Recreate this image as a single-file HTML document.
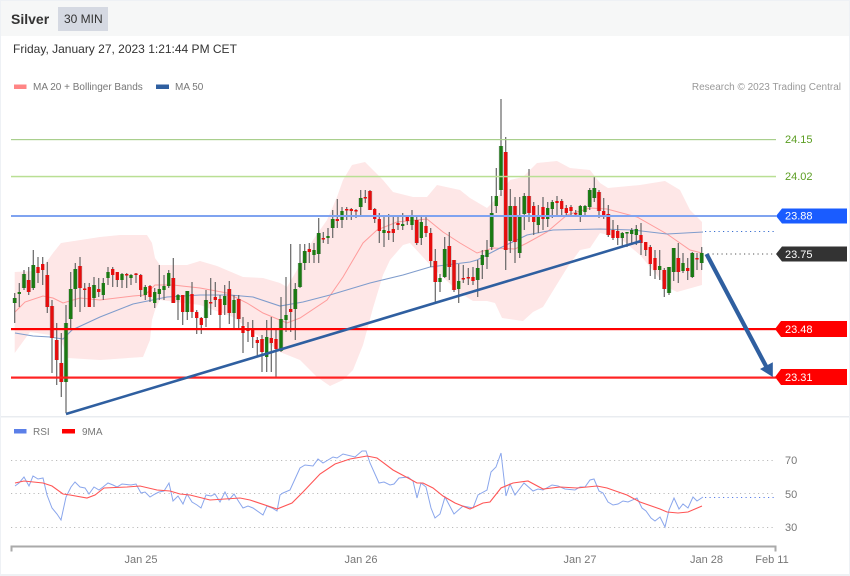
<!DOCTYPE html>
<html>
<head>
<meta charset="utf-8">
<style>
html,body{margin:0;padding:0;background:#fff}
body{width:850px;height:576px;overflow:hidden;position:relative;font-family:"Liberation Sans",sans-serif}
svg{position:absolute;left:0;top:0;filter:blur(.3px)}
text{font-family:"Liberation Sans",sans-serif}
</style>
</head>
<body>
<svg width="850" height="576" viewBox="0 0 850 576">
<rect width="850" height="576" fill="#fff"/>
<rect x="0" y="0" width="850" height="36" fill="#f6f7f7"/>
<rect x="58" y="7" width="50" height="24" fill="#d5d9e2"/>
<text x="11" y="24" font-size="14" font-weight="700" fill="#333">Silver</text>
<text x="64" y="23" font-size="12" fill="#333">30 MIN</text>
<text x="13" y="53" font-size="12" fill="#333">Friday, January 27, 2023 1:21:44 PM CET</text>
<rect x="14" y="84.5" width="12.5" height="4.5" fill="#ff8585"/>
<text x="33" y="90" font-size="10" fill="#777">MA 20 + Bollinger Bands</text>
<rect x="156" y="84.5" width="13" height="4.5" fill="#2f5fa0"/>
<text x="175" y="90" font-size="10" fill="#777">MA 50</text>
<text x="841" y="90" font-size="10" fill="#999" text-anchor="end">Research © 2023 Trading Central</text>

<!-- Bollinger band -->
<path fill="#fee7e7" d="M14.7 272L33 271 43 267 53 253 61 243 100 237 120 235 147 235 152 243 155 258 160 265 187 265 200 261 217 266 243 277 263 278 280 283 287 287 297 270 313 240 327 220 337 197 343 180 352 165 365 162 375 172 383 180 393 192 413 197 427 197 437 185 460 190 470 198 487 208 497 198 510 180 523 177 537 163 557 161 570 168 590 170 600 183 608 188 640 185 665 181 680 190 690 210 702 222V285L677 292 667 287 640 255 620 238 600 233 590 248 580 250 567 268 543 307 533 312 523 321 502 318 495 303 487 301 473 301 460 293 433 268 410 243 403 245 390 260 383 275 373 308 363 345 353 370 343 380 330 386 317 377 300 360 280 352 257 335 233 317 200 305 160 300 155 310 152 320 150 340 143 357 100 360 68 358 60 338 50 335 30 332 14.7 353Z"/>

<!-- MA lines -->
<path fill="none" stroke="#ff9c9c" stroke-width="1" d="M15 312L25 302 43 296 53 298 63 303 80 298 100 300 133 296 145 295 155 285 173 285 200 288 227 293 247 303 263 313 287 323 300 318 327 300 343 277 363 243 377 230 397 222 427 219 443 232 460 243 477 253 493 248 515 249 527 243 547 232 567 215 590 208 607 209 637 217 667 234 690 250 702 253"/>
<path fill="none" stroke="#7f9ccc" stroke-width="1.1" d="M15 333L33 336 50 337 63 339 72 330 100 317 133 304 167 297 200 295 230 295 253 297 280 306 303 302 330 295 370 283 403 275 430 267 470 262 477 260 500 248 527 235 553 230 600 229 633 230 667 234 703 232"/>

<!-- candles: wicks -->
<path fill="none" stroke="#666" stroke-width="1.2" d="M14.7 293V323M19.3 283V307M24 270V290M28.7 267V295M33.3 250V290M38 257V283M42.7 257V285M47.3 262V313M52 300V373M56.7 323V385M61.3 333V397M66 305V413M70.7 272V330M75.3 263V307M80 257V312M84.7 283V307M89.3 283V307M94 277V307M98.7 278V297M103.3 278V300M108 267V285M112.7 267V287M117.3 272V287M122 273V288M126.7 273V288M131 274V285M136 273V283M140.7 274V297M145.3 285V300M150 285V302M154.7 288V308M159.3 265V300M164 275V300M168.7 270V288M173.3 258V303M178 294V320M182.7 295V325M187.3 291V320M192 282V318M196.7 310V334M201.3 317V334M206 290V327M210.7 278V315M215.3 282V307M220 295V328M224.7 285V315M229.3 281V324M234 295V328M238.7 295V328M243 317V353M248 322V342M252.7 320V348M257.3 337V357M262 335V372M266.7 320V372M271.3 317V372M276 328V377M281 297V352M286 277V332M290.7 244V332M295.3 283V340M300 244V288M304.7 244V270M309.3 243V263M314 243V263M318.7 218V263M323.3 232V243M328 228V244M332.7 210V238M337.3 199V228M342 207V228M346.7 207V220M351.3 208V220M356 209V218M360.7 190V217M365.3 190V203M370 190V210M374.7 208V223M379.3 213V243M384 215V247M388.7 214V240M393.3 215V242M398 215V230M402.7 213V230M407.3 215V225M412 210V230M416.7 215V245M421.3 215V245M426 215V237M430.7 228V267M435.3 249V302M440 274V292M444.7 237V278M449.3 232V280M454 260V292M458.7 264V303M463.3 265V283M468.3 268V285M473 267V285M477.7 260V297M482.3 250V279M487 240V269M491.7 196V250M496.3 168V213M501 99V196M505.7 137V270M510.3 189V253M515 197V263M519.7 197V258M524.3 193V230M529 169V222M533.7 202V235M538.3 205V233M543 197V230M547.7 202V227M552.3 200V218M557 196V215M561.7 199V217M566.3 205V217M571 205V215M575.7 210V217M580.3 205V222M585 205V216M589.7 188V210M594.3 176V202M599 190V218M603.7 198V219M608.3 205V237M613 220V240M617.7 225V245M622.3 232V247M627 232V247M631.7 228V245M636.3 225V245M641 223V255M645.7 242V256M650.3 245V276M655 250V279M659.7 250V280M664.3 268V297M669 267V295M673.7 248V281M678.3 243V283M683 253V273M687.7 258V280M692.3 252V278M697 253V270M701.7 247V270"/>
<!-- candles: outlines -->
<path fill="none" stroke="#777" stroke-opacity=".55" stroke-width="4.4" d="M14.7 298V303M24 274V288M33.3 265V288M52 306V338M66 323V382M70.7 289V319M75.3 269V289M94 285V298M187.3 291V312M206 300V318M281 319V351M295.3 289V309M300 263V287M304.7 251V263M318.7 233V254M332.7 219V228M360.7 198V207M444.7 249V277M477.7 268V280M491.7 213V247M501 146V190M510.3 206V241M519.7 216V253M524.3 196V214M589.7 190V207M594.3 188V198M669 267V293M673.7 248V272M692.3 253V277M701.7 253V263M28.7 280V292M47.3 275V307M56.7 340V360M61.3 363V382M80 266V288M173.3 278V303M229.3 289V313M238.7 299V319M262 339V352M370 191V210M416.7 220V243M435.3 261V282M449.3 246V267M454 260V290M505.7 152V250M515 206V242M529 196V213M599 192V211M608.3 214V235M664.3 270V289M678.3 258V272"/>
<!-- candles: green bodies -->
<path fill="none" stroke="#1a7a12" stroke-width="3.3" d="M14.7 298V303M19.3 292V294M24 274V288M33.3 265V288M66 323V382M70.7 289V319M75.3 269V289M94 285V298M103.3 283V295M108 272V278M122 274V280M131 275V278M145.3 287V295M154.7 292V303M159.3 289V294M164 286V290M168.7 273V286M178 295V300M187.3 291V312M206 300V318M224.7 296V305M234 300V313M266.7 337V357M281 319V351M286 315V320M295.3 289V309M300 263V287M304.7 251V263M314 250V255M318.7 233V254M328 236V238M332.7 219V228M342 211V220M360.7 198V207M384 230V233M402.7 224V226M412 217V225M421.3 222V238M440 278V282M444.7 249V277M458.7 281V289M477.7 268V280M482.3 255V265M487 250V257M491.7 213V247M496.3 196V206M501 146V190M510.3 206V241M519.7 216V253M524.3 196V214M538.3 216V225M547.7 208V219M552.3 202V209M580.3 206V215M585 206V212M589.7 190V207M594.3 188V198M622.3 233V238M627 232V233.5M631.7 230V234M636.3 229V235M659.7 266V270M669 267V293M673.7 248V272M683 263V271M692.3 253V277M701.7 253V263"/>
<!-- candles: red bodies -->
<path fill="none" stroke="#e60d0d" stroke-width="3.3" d="M28.7 280V292M38 267V273M42.7 264V270M47.3 275V307M52 306V338M56.7 340V360M61.3 363V382M80 266V288M84.7 288.5V290M89.3 287V307M98.7 289V292M112.7 269V275M117.3 272V280M126.7 274V275.5M136 273.5V275M140.7 275V290M150 286V297M173.3 278V303M182.7 295V312M192 294V312M196.7 312V318M201.3 318V325M210.7 302V303.5M215.3 297V300M220 299V315M229.3 289V313M238.7 299V319M243 326V333M248 328V331M252.7 328V337M257.3 340V343M262 339V352M271.3 338V343M276 339V349M290.7 309V312M309.3 249V252M323.3 238V239.5M337.3 219V221M346.7 209V210.5M351.3 209V211M356 210V211.5M365.3 197V198.5M370 191V210M374.7 209V219M379.3 219V231M388.7 231V233M393.3 229V233M398 223V225M407.3 217V221M416.7 220V243M426 226V233M430.7 233V261M435.3 261V282M449.3 246V267M454 260V290M463.3 278V279.5M468.3 277V278.5M473 277V281M505.7 152V250M515 206V242M529 196V213M533.7 206V222M543 207V219M557 201V203M561.7 201V209M566.3 208V213M571 207V211M575.7 213V214.5M599 192V211M603.7 211V215M608.3 214V235M613 230V238M617.7 231V238M641 235V243M645.7 242V250M650.3 247V264M655 258V270M664.3 270V289M678.3 258V272M687.7 268V271M697 258V259.5"/>

<!-- horizontal levels -->
<rect x="11" y="139" width="765" height="1.2" fill="#a9cf8d"/>
<rect x="11" y="175.8" width="765" height="1.5" fill="#b9df94"/>
<rect x="11" y="215" width="765" height="2" fill="#7fa3f0"/>
<rect x="11" y="328" width="765" height="2.2" fill="#f00"/>
<rect x="11" y="376.5" width="765" height="2.2" fill="#f22"/>

<text x="785" y="143" font-size="11" fill="#5c9e23">24.15</text>
<text x="785" y="180" font-size="11" fill="#5c9e23">24.02</text>

<!-- dotted projections -->
<path stroke="#3a6fd0" stroke-width="1" stroke-dasharray="1.2 3.3" fill="none" d="M705 231.5H775"/>
<path stroke="#555" stroke-width="1" stroke-dasharray="1.2 3.3" fill="none" d="M708 254H775"/>

<!-- trend line and arrow -->
<path stroke="#2f5fa0" stroke-width="2.6" fill="none" d="M66 414L641 241"/>
<path stroke="#2f5fa0" stroke-width="4.2" fill="none" d="M706.5 254L767 368"/>
<path fill="#2f5fa0" d="M772.8 362.3V377L760 369Z"/>

<!-- price tags -->
<path fill="#1a5cff" d="M776 216L782 208.5H847V223.5H782Z"/>
<text x="785" y="219.5" font-size="11" fill="#fff">23.88</text>
<path fill="#333" d="M776 254L782 246.5H847V261.5H782Z"/>
<text x="785" y="258" font-size="11" fill="#fff">23.75</text>
<path fill="#f00" d="M775 329L781 321H847V337H781Z"/>
<text x="785" y="333" font-size="11" fill="#fff">23.48</text>
<path fill="#f00" d="M775 377L781 369H847V385H781Z"/>
<text x="785" y="381" font-size="11" fill="#fff">23.31</text>

<!-- separators -->
<rect x="0" y="416" width="850" height="1.5" fill="#e9ecf0"/>
<rect x="0" y="574" width="850" height="2" fill="#eef1f4"/>
<rect x="0" y="0" width="1" height="576" fill="#eef1f5"/>
<rect x="849" y="0" width="1" height="576" fill="#eef1f5"/>
<rect x="0" y="0" width="850" height="1" fill="#eef1f5"/>

<!-- RSI panel -->
<rect x="14" y="429" width="12.5" height="4.5" fill="#5b7fe8"/>
<text x="33" y="435" font-size="10" fill="#777">RSI</text>
<rect x="62" y="429" width="13" height="4.5" fill="#f00"/>
<text x="82" y="435" font-size="10" fill="#777">9MA</text>

<path stroke="#bbb" stroke-width="1" stroke-dasharray="1.2 3.3" fill="none" d="M11 460.5H776M11 493.5H776M11 527.5H776"/>
<text x="785" y="464" font-size="11" fill="#777">70</text>
<text x="785" y="498" font-size="11" fill="#777">50</text>
<text x="785" y="531" font-size="11" fill="#777">30</text>

<path fill="none" stroke="#8aa6ec" stroke-width="1" d="M15 486L19 483 24 477 29 486 33 476 38 479 43 478 47 495 52 508 57 514 61 520 66 497 71 487 75 482 80 487 85 488 89 494 94 487 99 490 103 487 108 483 113 485 117 487 122 484 131 485 136 484 141 493 145 492 150 497 155 494 159 492 164 491 169 483 173 501 178 496 183 504 187 494 192 502 197 505 201 508 206 495 211 496 215 494 220 502 225 492 229 500 234 494 239 502 243 508 248 506 253 508 263 515 267 506 272 508 277 511 280 495 283 493 290 490 300 468 305 465 313 466 318 459 323 463 333 457 337 458 343 454 355 457 362 451 366 451 370 463 379 483 384 482 390 485 394 484 399 478 408 477 413 481 417 498 421 483 426 487 431 508 435 518 440 514 445 497 454 514 463 506 473 508 478 495 487 490 491 472 496 467 501 453 506 496 510 484 515 495 524 483 533 491 538 489 543 490 552 485 558 486 565 489 575 490 580 487 585 487 590 480 594 479 599 491 603 493 608 502 613 505 618 504 623 501 628 502 637 498 642 508 646 511 651 518 655 521 660 517 665 527 669 510 674 498 679 509 683 504 688 508 693 497 697 501 703 497"/>
<path fill="none" stroke="#f55" stroke-width="1.1" d="M15 483L24 481 43 483 52 486 63 494 70 495 87 498 95 495 104 488 127 487 140 486 157 490 170 491 180 494 190 495 210 500 240 498 250 500 277 509 292 503 303 492 320 474 335 464 350 459 367 456 377 458 393 470 408 478 417 483 423 483 433 488 443 496 455 503 470 509 483 503 490 502 501 488 513 483 528 481 543 489 560 487 577 488 597 486 607 488 627 495 640 502 660 509 667 512 678 513 688 512 702 506"/>
<path stroke="#5b7fe8" stroke-width="1" stroke-dasharray="1.2 3.3" fill="none" d="M705 497.5H775"/>

<!-- time axis -->
<path fill="none" stroke="#aaa" stroke-width="2" d="M11.5 551.5V546.5H775.5V551.5"/>
<text x="141" y="563" font-size="11" fill="#777" text-anchor="middle">Jan 25</text>
<text x="361" y="563" font-size="11" fill="#777" text-anchor="middle">Jan 26</text>
<text x="580" y="563" font-size="11" fill="#777" text-anchor="middle">Jan 27</text>
<text x="706.5" y="563" font-size="11" fill="#777" text-anchor="middle">Jan 28</text>
<text x="772" y="563" font-size="11" fill="#777" text-anchor="middle">Feb 11</text>
</svg>
</body>
</html>
